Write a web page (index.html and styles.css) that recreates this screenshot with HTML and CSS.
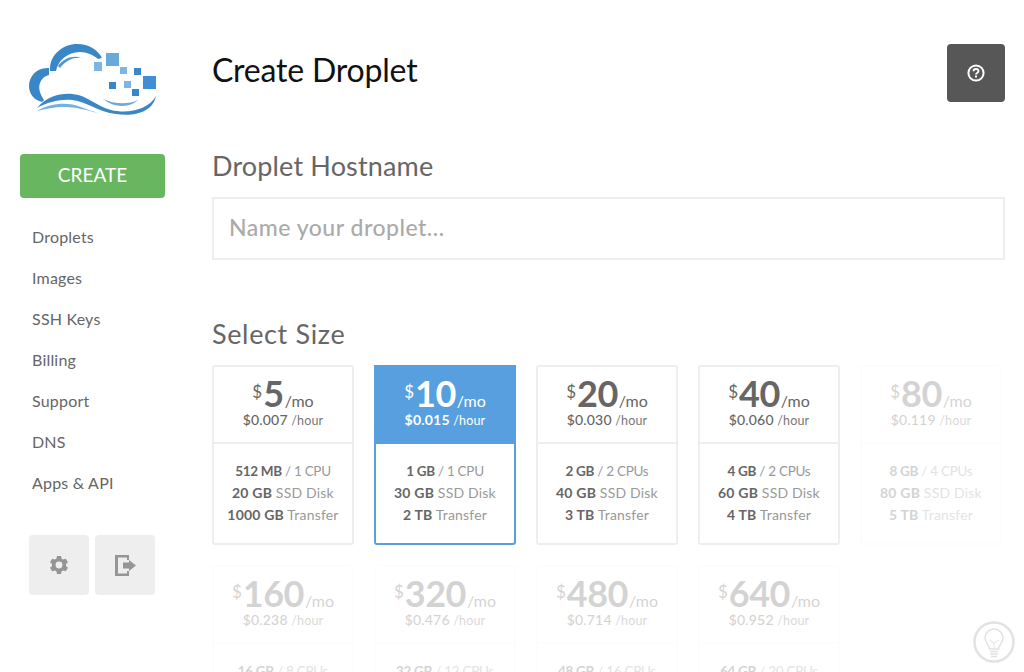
FILE: index.html
```html
<!DOCTYPE html>
<html lang="en">
<head>
<meta charset="utf-8">
<title>Create Droplet</title>
<link rel="stylesheet" href="styles.css">
</head>
<body>
<div class="app">
  <aside class="sidebar">
    <svg class="logo" viewBox="29 44 128 72" width="128" height="72" aria-label="Logo">
      <path fill="#3a87c8" d="M50 71C49 54 64 44 77 44C89 44 98 50 102 58L98 59C93 55 87 52 80 52C67 52 58 61 56 71Z"/>
      <path fill="#4f97d2" d="M58 66C64 58 73 55 82 58C74 57 66 60 60 68Z"/>
      <path fill="#3a87c8" d="M49 68C37 67 29 76 29 86C29 94 34 100 42 102L44 100C40 94 38 88 40 83C42 78 45 76 49 75Z"/>
      <path fill="#3a87c8" d="M37 108C46 97 60 93 72 94C87 95 96 106 111 110C128 114 148 110 156 96C153 112 134 117 116 114C98 112 88 102 72 100C60 99 48 102 37 108Z"/>
      <path fill="#75b0e0" d="M37 111C50 103 66 102 78 106C86 109 92 111 98 113C86 110 76 107 64 107C54 107 46 109 37 111Z"/>
      <path fill="#6aa9dc" d="M103 99C114 104 128 105 138 100C130 108 114 108 103 99Z"/>
      <rect x="106" y="53" width="13" height="13" fill="#6aa9dc"/>
      <rect x="94" y="62" width="8" height="9" fill="#7fb5e2"/>
      <rect x="120" y="67" width="7" height="7" fill="#7fb5e2"/>
      <rect x="134" y="68" width="7" height="7" fill="#3a87c8"/>
      <rect x="143" y="76" width="13" height="13" fill="#3f8fd6"/>
      <rect x="109" y="82" width="7" height="7" fill="#3a87c8"/>
      <rect x="124" y="81" width="7" height="7" fill="#7fb5e2"/>
      <rect x="132" y="89" width="7" height="7" fill="#3a87c8"/>
    </svg>
    <a class="create" href="#">CREATE</a>
    <nav class="nav">
      <a href="#">Droplets</a>
      <a href="#">Images</a>
      <a href="#">SSH Keys</a>
      <a href="#">Billing</a>
      <a href="#">Support</a>
      <a href="#">DNS</a>
      <a href="#">Apps &amp; API</a>
    </nav>
    <div class="tools">
      <a class="tool" href="#" aria-label="Settings">
        <svg viewBox="0 0 20 20" width="20" height="20"><path fill="#959595" fill-rule="evenodd" d="M8 0h4l.6 2.800 1.500.8L16.800 2.700 19 6.200l-2 1.900v1.800l2 1.900-2.200 3.500-2.700-.9-1.500.8L12 18H8l-.6-2.800-1.500-.8-2.700.9L1 11.800l2-1.900V8.100L1 6.200l2.200-3.500 2.700.9 1.500-.8zM10 5.600a3.400 3.400 0 1 0 0 6.800 3.400 3.400 0 0 0 0-6.800z" transform="translate(0 1)"/></svg>
      </a>
      <a class="tool" href="#" aria-label="Log out">
        <svg viewBox="0 0 21 21" width="21" height="21"><path fill="#959595" d="M0 0h14v5h-2V2.500H3v16h9V16h2v5H0z"/><path fill="#959595" d="M8 7.500h6V5l7 5.500-7 5.500v-2.500H8z"/></svg>
      </a>
    </div>
  </aside>
  <main class="main">
    <header class="head">
      <h1 class="title">Create Droplet</h1>
      <a class="help" href="#" aria-label="Help">
        <svg viewBox="0 0 18 18" width="18" height="18"><circle cx="9" cy="9" r="7.600" fill="none" stroke="#fff" stroke-width="2"/><path d="M6.500 7.200C6.500 5.800 7.600 5 9 5s2.500.8 2.500 2.100c0 1.900-2.500 1.800-2.500 3.400" fill="none" stroke="#fff" stroke-width="1.800"/><rect x="8" y="11.500" width="2" height="2" fill="#fff"/></svg>
      </a>
    </header>
    <h2 class="section host">Droplet Hostname</h2>
    <input class="field" type="text" placeholder="Name your droplet...">
    <h2 class="section size">Select Size</h2>
    <div class="sizes">
      <div class="card">
        <div class="price"><div class="mo"><sup>$</sup><b>5</b>/mo</div><div class="hr"><span>$0.007</span> /hour</div></div>
        <ul class="spec"><li><b>512 MB</b> / 1 CPU</li><li><b>20 GB</b> SSD Disk</li><li><b>1000 GB</b> Transfer</li></ul>
      </div>
      <div class="card active">
        <div class="price"><div class="mo"><sup>$</sup><b>10</b>/mo</div><div class="hr"><span>$0.015</span> /hour</div></div>
        <ul class="spec"><li><b>1 GB</b> / 1 CPU</li><li><b>30 GB</b> SSD Disk</li><li><b>2 TB</b> Transfer</li></ul>
      </div>
      <div class="card">
        <div class="price"><div class="mo"><sup>$</sup><b>20</b>/mo</div><div class="hr"><span>$0.030</span> /hour</div></div>
        <ul class="spec"><li><b>2 GB</b> / 2 CPUs</li><li><b>40 GB</b> SSD Disk</li><li><b>3 TB</b> Transfer</li></ul>
      </div>
      <div class="card">
        <div class="price"><div class="mo"><sup>$</sup><b>40</b>/mo</div><div class="hr"><span>$0.060</span> /hour</div></div>
        <ul class="spec"><li><b>4 GB</b> / 2 CPUs</li><li><b>60 GB</b> SSD Disk</li><li><b>4 TB</b> Transfer</li></ul>
      </div>
      <div class="card off">
        <div class="price"><div class="mo"><sup>$</sup><b>80</b>/mo</div><div class="hr"><span>$0.119</span> /hour</div></div>
        <ul class="spec"><li><b>8 GB</b> / 4 CPUs</li><li><b>80 GB</b> SSD Disk</li><li><b>5 TB</b> Transfer</li></ul>
      </div>
      <div class="card off">
        <div class="price"><div class="mo"><sup>$</sup><b>160</b>/mo</div><div class="hr"><span>$0.238</span> /hour</div></div>
        <ul class="spec"><li><b>16 GB</b> / 8 CPUs</li></ul>
      </div>
      <div class="card off">
        <div class="price"><div class="mo"><sup>$</sup><b>320</b>/mo</div><div class="hr"><span>$0.476</span> /hour</div></div>
        <ul class="spec"><li><b>32 GB</b> / 12 CPUs</li></ul>
      </div>
      <div class="card off">
        <div class="price"><div class="mo"><sup>$</sup><b>480</b>/mo</div><div class="hr"><span>$0.714</span> /hour</div></div>
        <ul class="spec"><li><b>48 GB</b> / 16 CPUs</li></ul>
      </div>
      <div class="card off">
        <div class="price"><div class="mo"><sup>$</sup><b>640</b>/mo</div><div class="hr"><span>$0.952</span> /hour</div></div>
        <ul class="spec"><li><b>64 GB</b> / 20 CPUs</li></ul>
      </div>
    </div>
  </main>
  <a class="bulb" href="#" aria-label="Tips">
    <svg viewBox="0 0 42 42" width="42" height="42"><circle cx="21" cy="21" r="19.500" fill="#fff" stroke="#e2e2e2" stroke-width="2.500"/><path fill="none" stroke="#e2e2e2" stroke-width="1.500" d="M16.500 28c0-4-4.500-6-4.500-11a9 9 0 0 1 18 0c0 5-4.500 7-4.500 11z"/><path fill="none" stroke="#e8e8e8" stroke-width="1.200" d="M16 19l5 3 5-3M21 22v6"/><path stroke="#e2e2e2" stroke-width="1.500" d="M17 30.500h8M17 33h8M18 35.500h6"/></svg>
  </a>
</div>
</body>
</html>
```
FILE: styles.css
```css
* { box-sizing: border-box; }
html, body { margin: 0; height: 100%; overflow: hidden; background: #fff; }
body { font-family: Lato, "Open Sans", sans-serif; color: #666; }
a { text-decoration: none; color: inherit; }

.app { display: flex; height: 672px; overflow: hidden; position: relative; }

.sidebar { width: 212px; flex: none; padding: 44px 0 0 20px; display: flex; flex-direction: column; align-items: flex-start; }
.logo { display: block; margin: 0 0 38px 9px; }
.create { width: 145px; height: 44px; background: #69b660; border-radius: 4px; color: #fff; font-size: 19px; line-height: 42px; text-align: center; }
.nav { display: flex; flex-direction: column; margin: 18px 0 0 12px; }
.nav a { height: 41px; line-height: 41px; font-size: 16px; letter-spacing: .2px; color: #666; }
.tools { display: flex; gap: 6px; margin: 32px 0 0 9px; }
.tool { width: 60px; height: 60px; background: #eee; border-radius: 4px; display: flex; align-items: center; justify-content: center; }

.main { width: 793px; flex: none; padding-top: 44px; }
.head { display: flex; justify-content: space-between; align-items: flex-start; height: 58px; }
.title { margin: 0; font-size: 32px; font-weight: 400; line-height: 52px; color: #111; letter-spacing: -.2px; }
.help { width: 58px; height: 58px; background: #575757; border-radius: 4px; display: flex; align-items: center; justify-content: center; }
.section { margin: 0; font-size: 27px; font-weight: 400; line-height: 34px; color: #666; letter-spacing: .15px; }
.host { margin-top: 47px; }
.field { display: block; width: 793px; height: 63px; margin-top: 14px; border: 2px solid #eee; padding: 0 15px 4px; font: 500 23px Lato, "Open Sans", sans-serif; letter-spacing: .5px; color: #666; outline: 0; }
.field::placeholder { color: #aaa; opacity: 1; }
.size { margin-top: 57px; letter-spacing: .65px; }

.sizes { display: grid; grid-template-columns: repeat(5, 142px); gap: 20px; margin-top: 14px; }
.card { height: 180px; border: 2px solid #eee; border-radius: 3px; text-align: center; }
.price { height: 77px; border-bottom: 2px solid #eee; padding-top: 20px; }
.mo { height: 28px; font-size: 16px; line-height: 28px; color: #666; white-space: nowrap; }
.mo b { font-size: 36px; line-height: 0; font-weight: 700; margin-right: 1px; letter-spacing: -.5px; }
.mo sup { font-size: 17px; line-height: 0; vertical-align: 9px; margin-right: 1px; }
.hr { font-size: 12.500px; line-height: 15px; margin-top: -3px; color: #777; letter-spacing: .2px; }
.hr span { font-size: 14px; font-weight: 500; color: #666; }
.spec { list-style: none; margin: 0; padding: 16px 0 0; font-size: 14px; line-height: 22px; color: #999; letter-spacing: .2px; white-space: nowrap; }
.spec li:first-child { font-size: 13.500px; letter-spacing: -.3px; }
.spec b { color: #666; font-weight: 700; }

.active { border-color: #589fdf; }
.active .price { background: #589fdf; border-bottom-color: #589fdf; height: 79px; margin: -2px -2px 0; padding-top: 22px; }
.active .mo, .active .hr, .active .hr span { color: #fff; }
.active .hr span { font-weight: 700; }

.off { opacity: .28; border-color: #f8f8f8; }
.off .price { border-bottom-color: #f8f8f8; }

.bulb { position: absolute; left: 973px; top: 621px; display: block; line-height: 0; }
```
